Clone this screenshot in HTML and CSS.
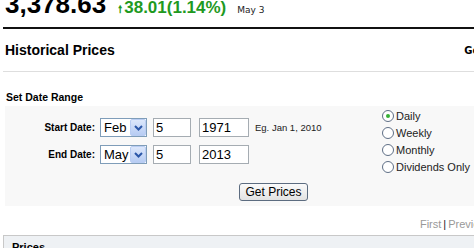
FILE: index.html
```html
<!DOCTYPE html>
<html lang="en">
<head>
  <meta charset="UTF-8"/>
  <title>Historical Prices</title>
  <link rel="stylesheet" href="styles.css">
</head>
<body>
<!-- Quote summary (top is cut off) -->
<div class="quote">
  <span class="last">3,378.63</span>
  <span class="change"><span class="arrow">&#129045;</span>38.01(1.14%)</span>
  <span class="date">May 3</span>
</div>

<!-- Section title -->
<div class="title-bar">
  <h2>Historical Prices</h2>
  <span class="more">Get</span>
</div>

<h3 class="range-title">Set Date Range</h3>

<form class="range">
  <div class="dates">
    <div class="row">
      <label class="lbl">Start Date:</label>
      <div class="select">
        <select><option>Feb</option></select>
        <span class="drop"><svg width="9" height="6" viewBox="0 0 9 6"><path d="M1 1 L4.5 4.5 L8 1" fill="none" stroke="#2b57a8" stroke-width="2"/></svg></span>
      </div>
      <input class="day" type="text" value="5">
      <input class="year" type="text" value="1971">
      <span class="hint">Eg. Jan 1, 2010</span>
    </div>
    <div class="row">
      <label class="lbl">End Date:</label>
      <div class="select">
        <select><option>May</option></select>
        <span class="drop"><svg width="9" height="6" viewBox="0 0 9 6"><path d="M1 1 L4.5 4.5 L8 1" fill="none" stroke="#2b57a8" stroke-width="2"/></svg></span>
      </div>
      <input class="day" type="text" value="5">
      <input class="year" type="text" value="2013">
    </div>
  </div>

  <div class="freq">
    <label><input type="radio" name="f" checked> Daily</label>
    <label><input type="radio" name="f"> Weekly</label>
    <label><input type="radio" name="f"> Monthly</label>
    <label><input type="radio" name="f"> Dividends Only</label>
  </div>

  <div class="submit">
    <button type="button">Get Prices</button>
  </div>
</form>

<div class="pager"><span>First<span class="sep">|</span>Previous</span></div>

<div class="table-head">Prices</div>
</body>
</html>
```

FILE: styles.css
```css
/* Page basics */
body {
    margin: 0;
    font-family: "Liberation Sans", Arial, sans-serif;
    color: #000;
    background: #fff;
    overflow: hidden;
    height: 248px;
}

/* Quote line */
.quote {
    display: flex;
    align-items: baseline;
    height: 38px;
    margin: -11px 0 0 3px;
    padding-left: 2px;
    border-bottom: 2px solid #111;
    line-height: 30px;
}

.last {
    font-size: 26px;
    font-weight: bold;
}

.change {
    font-size: 17px;
    font-weight: bold;
    color: #1f9a1f;
    margin-left: 12px;
}

.arrow {
    font-size: 10px;
    margin-right: 2px;
}

.date {
    font-family: "DejaVu Sans", sans-serif;
    font-size: 9px;
    color: #222;
    margin-left: 11px;
}

/* Title bar */
.title-bar {
    display: flex;
    justify-content: space-between;
    align-items: center;
    height: 42px;
    margin-left: 3px;
    border-bottom: 1px solid #dedede;
    overflow: hidden;
}

.title-bar h2 {
    margin: 0 0 0 2px;
    font-size: 14px;
    font-weight: bold;
}

.more {
    font-family: "DejaVu Sans", sans-serif;
    font-size: 10px;
    font-weight: bold;
    margin-right: -10px;
}

.range-title {
    margin: 19px 0 0 6px;
    font-size: 10.5px;
    font-weight: bold;
    height: 15px;
}

/* Date range form */
.range {
    margin: 0 0 0 5px;
    padding: 11px 0 5px;
    background: #f8f8f8;
    display: grid;
    grid-template-columns: 370px 1fr;
}

.dates {
    display: flex;
    flex-direction: column;
    gap: 8px;
    padding-top: 1px;
}

.row {
    display: flex;
    align-items: center;
    height: 19px;
}

.lbl {
    width: 90px;
    text-align: right;
    font-size: 10px;
    font-weight: bold;
    margin-right: 5px;
}

.select {
    position: relative;
    width: 47px;
    height: 19px;
}

.select select {
    appearance: none;
    box-sizing: border-box;
    width: 100%;
    height: 19px;
    border: 1px solid #7f9db9;
    background: #fff;
    font-family: "Liberation Sans", Arial, sans-serif;
    font-size: 13px;
    padding: 0 0 0 3px;
    border-radius: 0;
    color: #000;
}

/* Blue arrow button of the select, sits over the box */
.drop {
    position: absolute;
    right: 1px;
    top: 1px;
    width: 16px;
    height: 17px;
    box-sizing: border-box;
    border: 1px solid #b9cdf3;
    border-radius: 2px;
    background: linear-gradient(#dce7fb, #b7ccf3);
    display: flex;
    align-items: center;
    justify-content: center;
}

input[type="text"] {
    box-sizing: border-box;
    height: 19px;
    border: 1px solid #a5acb2;
    font-family: "Liberation Sans", Arial, sans-serif;
    font-size: 13px;
    padding: 0 2px;
    background: #fff;
}

.day {
    width: 38px;
    margin-left: 6px;
}

.year {
    width: 50px;
    margin-left: 8px;
}

.hint {
    font-size: 9.5px;
    margin-left: 6px;
    color: #222;
}

/* Frequency radios */
.freq {
    display: flex;
    flex-direction: column;
    padding-left: 7px;
    margin-top: -10px;
}

.freq label {
    display: flex;
    align-items: center;
    height: 17px;
    font-size: 11px;
    color: #222;
}

.freq input {
    appearance: none;
    width: 12px;
    height: 12px;
    margin: 0 2px 0 0;
    border: 1px solid #5f6f86;
    border-radius: 50%;
    background: #fff;
    display: flex;
    align-items: center;
    justify-content: center;
}

.freq input:checked::after {
    content: "";
    width: 4px;
    height: 4px;
    border-radius: 50%;
    background: #35b035;
}

.submit {
    grid-column: 1 / 3;
    text-align: center;
    padding: 7px 0 0 68px;
}

button {
    font-family: "Liberation Sans", Arial, sans-serif;
    font-size: 12px;
    height: 18px;
    padding: 0 5px;
    border: 1px solid #5c6c80;
    border-radius: 3px;
    background: linear-gradient(#fafafa, #e2e2e2);
    color: #000;
}

/* Pager and table header */
.pager {
    display: flex;
    justify-content: flex-end;
    font-size: 11px;
    color: #999;
    margin-top: 12px;
    margin-right: -17px;
    height: 14px;
    white-space: nowrap;
}

.sep {
    color: #222;
    margin: 0 2px;
}

.table-head {
    margin: 3px 0 0 3px;
    border-top: 1px solid #c8c8c8;
    border-left: 1px solid #c8c8c8;
    background: #eef1f4;
    font-size: 11px;
    font-weight: bold;
    padding: 5px 0 4px 8px;
}
```
